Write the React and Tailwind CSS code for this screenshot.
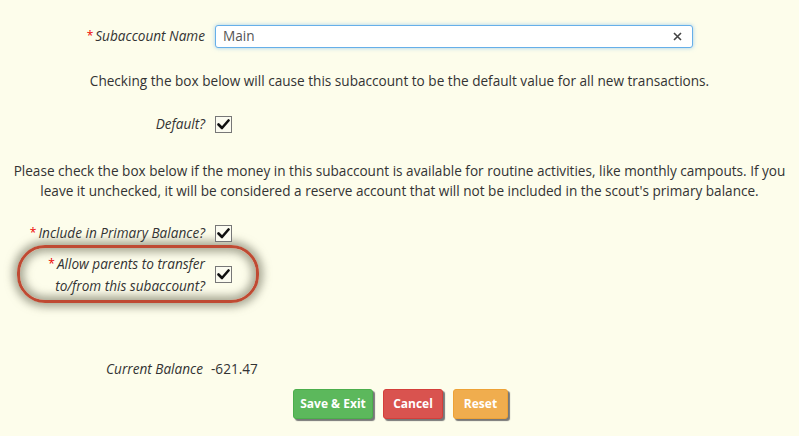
import React from 'react';

const Check = () => (
  <div className="w-[17px] h-[17px] border border-[#777] bg-[#fbfbf0] flex items-center justify-center">
    <svg width="13" height="11" viewBox="0 0 13 11">
      <path d="M1.5 5.5 L5 9 L11.5 1.5" fill="none" stroke="#111" strokeWidth="2.6" strokeLinecap="round" strokeLinejoin="round" />
    </svg>
  </div>
);

const Req = () => <span className="text-[#e00] not-italic text-[12px] mr-[2px] relative -top-[1px]">*</span>;

const App = () => {
  return (
    <div
      className="w-[799px] h-[436px] bg-[#fdfdeb] text-[#333] text-[13.6px] overflow-hidden"
      style={{ fontFamily: '"Open Sans", "Liberation Sans", sans-serif' }}
    >
      <div className="pt-[25px]">
        {/* subaccount name */}
        <div className="flex items-center h-[22px]">
          <div className="w-[205px] text-right italic">
            <Req />Subaccount Name
          </div>
          <div className="ml-[10px] w-[478px] h-[23px] bg-white border border-[#66afe9] rounded-[3px] shadow-[0_0_4px_rgba(102,175,233,0.6)] flex items-center justify-between px-[7px]">
            <span className="text-[#555]">Main</span>
            <svg width="9" height="9" viewBox="0 0 9 9" className="mr-[3px]">
              <path d="M1 1 L8 8 M8 1 L1 8" stroke="#444" strokeWidth="1.6" />
            </svg>
          </div>
        </div>

        <p className="text-center mt-[24px] leading-[20px]">
          Checking the box below will cause this subaccount to be the default value for all new transactions.
        </p>

        <div className="flex items-center mt-[24px] h-[18px]">
          <div className="w-[205px] text-right italic">Default?</div>
          <div className="ml-[10px]"><Check /></div>
        </div>

        <p className="text-center mt-[28px] leading-[20px]">
          Please check the box below if the money in this subaccount is available for routine activities, like monthly campouts. If you
          <br />
          leave it unchecked, it will be considered a reserve account that will not be included in the scout's primary balance.
        </p>

        <div className="flex items-center mt-[23px] h-[18px]">
          <div className="w-[205px] text-right italic">
            <Req />Include in Primary Balance?
          </div>
          <div className="ml-[10px]"><Check /></div>
        </div>

        <div className="ml-[17px] mt-[3px] w-[242px] h-[58px] border-[3px] border-[#bf4a33] rounded-[28px] shadow-[0_0_8px_4px_rgba(110,110,90,0.6),inset_0_0_9px_4px_rgba(110,110,90,0.6)] flex items-center">
          <div className="w-[185px] text-right italic leading-[21px]">
            <Req />Allow parents to transfer
            <br />
            to/from this subaccount?
          </div>
          <div className="ml-[10px]"><Check /></div>
        </div>

        <div className="flex items-center mt-[57px] h-[18px]">
          <div className="w-[203px] text-right italic">Current Balance</div>
          <div className="ml-[8px]">-621.47</div>
        </div>

        <div className="flex justify-center gap-[10px] mt-[11px] pl-[2px] text-white font-bold text-[12px]">
          <button className="w-[80px] h-[30px] bg-[#5cb85c] border border-[#4cae4c] rounded-[3px] shadow-[2px_2px_1px_#777]">Save &amp; Exit</button>
          <button className="w-[60px] h-[30px] bg-[#d9534f] border border-[#d43f3a] rounded-[3px] shadow-[2px_2px_1px_#777]">Cancel</button>
          <button className="w-[55px] h-[30px] bg-[#f0ad4e] border border-[#eea236] rounded-[3px] shadow-[2px_2px_1px_#777]">Reset</button>
        </div>
      </div>
    </div>
  );
};

export default App;
